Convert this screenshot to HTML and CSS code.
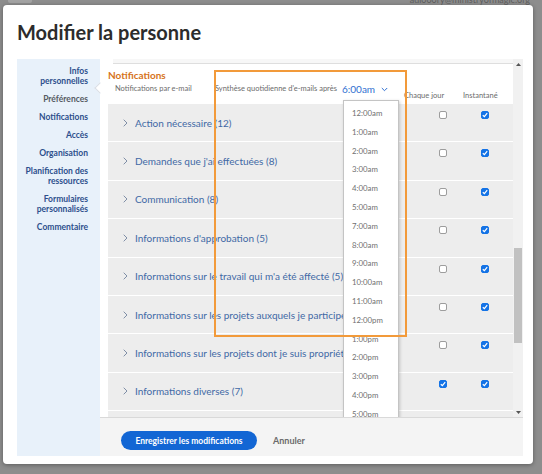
FILE: index.html
```html
<!DOCTYPE html>
<html lang="fr">
<head>
<meta charset="utf-8">
<title>Modifier la personne</title>
<link rel="stylesheet" href="styles.css">
</head>
<body>
<div class="app-bar">
  <span class="app-tab"></span>
  <span class="app-email">adiooory@ministryofmagic.org</span>
</div>

<div class="modal">
  <h1 class="title">Modifier la personne</h1>
  <div class="body">
    <nav class="side">
      <a class="side-item">Infos<br>personnelles</a>
      <a class="side-item muted">Préférences</a>
      <a class="side-item">Notifications</a>
      <a class="side-item">Accès</a>
      <a class="side-item">Organisation</a>
      <a class="side-item">Planification des<br>ressources</a>
      <a class="side-item">Formulaires<br>personnalisés</a>
      <a class="side-item">Commentaire</a>
    </nav>
    <div class="main">
      <span class="notch"></span>
      <div class="scroll">
        <div class="content">
          <div class="strip"></div>
          <div class="section">
            <div class="sec-title">Notifications</div>
            <div class="head">
              <span class="lbl">Notifications par e-mail</span>
              <span class="synth">Synthèse quotidienne d'e-mails après</span>
              <span class="sel">6:00am<svg class="sel-chev" width="7" height="5" viewBox="0 0 7 5"><path d="M0.8 1 L3.5 3.7 L6.2 1" fill="none" stroke="#2f6fd0" stroke-width="1"/></svg></span>
              <span class="spacer"></span>
              <span class="col col-a">Chaque jour</span>
              <span class="col col-b">Instantané</span>
            </div>

            <div class="row">
              <svg class="chev" width="5" height="8" viewBox="0 0 5 8"><path d="M0.7 0.7 L4 4 L0.7 7.3" fill="none" stroke="#7f8ea6" stroke-width="1"/></svg>
              <span class="row-label">Action nécessaire (12)</span>
              <span class="spacer"></span>
              <span class="cb-cell"><span class="cb"></span></span>
              <span class="cb-cell"><span class="cb on"><svg width="6" height="6" viewBox="0 0 6 6"><path d="M0.8 3.2 L2.4 4.7 L5.2 1.2" fill="none" stroke="#fff" stroke-width="1.2"/></svg></span></span>
            </div>
            <div class="row">
              <svg class="chev" width="5" height="8" viewBox="0 0 5 8"><path d="M0.7 0.7 L4 4 L0.7 7.3" fill="none" stroke="#7f8ea6" stroke-width="1"/></svg>
              <span class="row-label">Demandes que j'ai effectuées (8)</span>
              <span class="spacer"></span>
              <span class="cb-cell"><span class="cb"></span></span>
              <span class="cb-cell"><span class="cb on"><svg width="6" height="6" viewBox="0 0 6 6"><path d="M0.8 3.2 L2.4 4.7 L5.2 1.2" fill="none" stroke="#fff" stroke-width="1.2"/></svg></span></span>
            </div>
            <div class="row">
              <svg class="chev" width="5" height="8" viewBox="0 0 5 8"><path d="M0.7 0.7 L4 4 L0.7 7.3" fill="none" stroke="#7f8ea6" stroke-width="1"/></svg>
              <span class="row-label">Communication (8)</span>
              <span class="spacer"></span>
              <span class="cb-cell"><span class="cb"></span></span>
              <span class="cb-cell"><span class="cb on"><svg width="6" height="6" viewBox="0 0 6 6"><path d="M0.8 3.2 L2.4 4.7 L5.2 1.2" fill="none" stroke="#fff" stroke-width="1.2"/></svg></span></span>
            </div>
            <div class="row">
              <svg class="chev" width="5" height="8" viewBox="0 0 5 8"><path d="M0.7 0.7 L4 4 L0.7 7.3" fill="none" stroke="#7f8ea6" stroke-width="1"/></svg>
              <span class="row-label">Informations d'approbation (5)</span>
              <span class="spacer"></span>
              <span class="cb-cell"><span class="cb"></span></span>
              <span class="cb-cell"><span class="cb on"><svg width="6" height="6" viewBox="0 0 6 6"><path d="M0.8 3.2 L2.4 4.7 L5.2 1.2" fill="none" stroke="#fff" stroke-width="1.2"/></svg></span></span>
            </div>
            <div class="row">
              <svg class="chev" width="5" height="8" viewBox="0 0 5 8"><path d="M0.7 0.7 L4 4 L0.7 7.3" fill="none" stroke="#7f8ea6" stroke-width="1"/></svg>
              <span class="row-label">Informations sur le travail qui m'a été affecté (5)</span>
              <span class="spacer"></span>
              <span class="cb-cell"><span class="cb"></span></span>
              <span class="cb-cell"><span class="cb on"><svg width="6" height="6" viewBox="0 0 6 6"><path d="M0.8 3.2 L2.4 4.7 L5.2 1.2" fill="none" stroke="#fff" stroke-width="1.2"/></svg></span></span>
            </div>
            <div class="row">
              <svg class="chev" width="5" height="8" viewBox="0 0 5 8"><path d="M0.7 0.7 L4 4 L0.7 7.3" fill="none" stroke="#7f8ea6" stroke-width="1"/></svg>
              <span class="row-label">Informations sur les projets auxquels je participe</span>
              <span class="spacer"></span>
              <span class="cb-cell"><span class="cb"></span></span>
              <span class="cb-cell"><span class="cb on"><svg width="6" height="6" viewBox="0 0 6 6"><path d="M0.8 3.2 L2.4 4.7 L5.2 1.2" fill="none" stroke="#fff" stroke-width="1.2"/></svg></span></span>
            </div>
            <div class="row">
              <svg class="chev" width="5" height="8" viewBox="0 0 5 8"><path d="M0.7 0.7 L4 4 L0.7 7.3" fill="none" stroke="#7f8ea6" stroke-width="1"/></svg>
              <span class="row-label">Informations sur les projets dont je suis propriét</span>
              <span class="spacer"></span>
              <span class="cb-cell"><span class="cb"></span></span>
              <span class="cb-cell"><span class="cb on"><svg width="6" height="6" viewBox="0 0 6 6"><path d="M0.8 3.2 L2.4 4.7 L5.2 1.2" fill="none" stroke="#fff" stroke-width="1.2"/></svg></span></span>
            </div>
            <div class="row">
              <svg class="chev" width="5" height="8" viewBox="0 0 5 8"><path d="M0.7 0.7 L4 4 L0.7 7.3" fill="none" stroke="#7f8ea6" stroke-width="1"/></svg>
              <span class="row-label">Informations diverses (7)</span>
              <span class="spacer"></span>
              <span class="cb-cell"><span class="cb on"><svg width="6" height="6" viewBox="0 0 6 6"><path d="M0.8 3.2 L2.4 4.7 L5.2 1.2" fill="none" stroke="#fff" stroke-width="1.2"/></svg></span></span>
              <span class="cb-cell"><span class="cb on"><svg width="6" height="6" viewBox="0 0 6 6"><path d="M0.8 3.2 L2.4 4.7 L5.2 1.2" fill="none" stroke="#fff" stroke-width="1.2"/></svg></span></span>
            </div>
            <div class="row row-last">
              <span class="spacer"></span>
            </div>
          </div>
        </div>

        <div class="sbar">
          <span class="sb-btn"><svg width="5" height="3" viewBox="0 0 5 3"><path d="M0 3 L2.5 0 L5 3 Z" fill="#555"/></svg></span>
          <span class="sb-track"><span class="sb-thumb"></span></span>
          <span class="sb-btn"><svg width="5" height="3" viewBox="0 0 5 3"><path d="M0 0 L2.5 3 L5 0 Z" fill="#555"/></svg></span>
        </div>

        <ul class="dropdown">
          <li>12:00am</li>
          <li>1:00am</li>
          <li>2:00am</li>
          <li>3:00am</li>
          <li>4:00am</li>
          <li>5:00am</li>
          <li>7:00am</li>
          <li>8:00am</li>
          <li>9:00am</li>
          <li>10:00am</li>
          <li>11:00am</li>
          <li>12:00pm</li>
          <li>1:00pm</li>
          <li>2:00pm</li>
          <li>3:00pm</li>
          <li>4:00pm</li>
          <li>5:00pm</li>
        </ul>
      </div>
      <div class="footer">
        <button class="btn-primary">Enregistrer les modifications</button>
        <button class="btn-link">Annuler</button>
      </div>
    </div>
  </div>
</div>

<div class="annot"></div>
</body>
</html>
```

FILE: styles.css
```css
html, body {
  margin: 0;
  padding: 0;
}
body {
  width: 542px;
  height: 474px;
  overflow: hidden;
  background: #8d8d8d;
  font-family: Lato, "Open Sans", Arial, sans-serif;
  position: relative;
}

.app-bar {
  display: flex;
  justify-content: space-between;
  align-items: flex-start;
  height: 5px;
  padding: 0 12px 0 8px;
  overflow: hidden;
}
.app-tab {
  width: 24px;
  height: 3px;
  background: #a3a3a3;
  border-radius: 0 0 2px 2px;
}
.app-email {
  font-size: 9px;
  line-height: 10px;
  color: #5e5e5e;
  margin-top: -5px;
}

.modal {
  position: absolute;
  left: 3px;
  top: 5px;
  width: 530px;
  height: 459px;
  box-sizing: border-box;
  padding: 0 10px 8px 14px;
  background: #fff;
  border-radius: 4px;
  box-shadow: 0 1px 4px rgba(0, 0, 0, 0.35);
  display: flex;
  flex-direction: column;
}

.title {
  margin: 0;
  height: 54px;
  box-sizing: border-box;
  padding-top: 15px;
  font-size: 20px;
  line-height: 24px;
  font-weight: 700;
  color: #2c2c2c;
}

.body {
  display: flex;
  height: 397px;
}

.side {
  width: 83px;
  box-sizing: border-box;
  padding: 7px 12px 0 0;
  background: #e8f1fa;
  display: flex;
  flex-direction: column;
  gap: 8px;
  text-align: right;
}
.side-item {
  font-size: 8.5px;
  line-height: 10px;
  font-weight: 700;
  color: #2d4f8c;
}
.side-item.muted {
  color: #555a62;
}

.main {
  flex: 1;
  display: flex;
  flex-direction: column;
  position: relative;
  background: #fff;
}
.notch {
  position: absolute;
  left: -4px;
  top: 25px;
  width: 7px;
  height: 7px;
  background: #fff;
  border-left: 1px solid #d9dee5;
  border-bottom: 1px solid #d9dee5;
  transform: rotate(45deg);
}

.scroll {
  height: 358px;
  position: relative;
  overflow: hidden;
  display: flex;
}
.content {
  width: 413px;
}
.strip {
  margin-left: 13px;
  height: 4px;
  background: #f7f7f7;
  border-bottom: 1px solid #dedede;
}
.section {
  padding-left: 8px;
}
.sec-title {
  margin-top: 5px;
  font-size: 10px;
  line-height: 12px;
  font-weight: 700;
  color: #d6731a;
}

.head {
  height: 23px;
  box-sizing: border-box;
  padding: 3px 16px 0 7px;
  display: flex;
  align-items: flex-start;
  font-size: 7.5px;
  line-height: 10px;
  color: #6c6c6c;
  white-space: nowrap;
}
.lbl {
  width: 100px;
}
.synth {
  width: 127px;
}
.sel {
  display: flex;
  align-items: center;
  font-size: 10px;
  line-height: 10px;
  color: #2f6fd0;
}
.sel-chev {
  margin-left: 6px;
}
.spacer {
  flex: 1;
}
.col {
  text-align: center;
  font-size: 7.5px;
  margin-top: 7px;
}
.col-a {
  width: 40px;
  margin-right: 19px;
}
.col-b {
  width: 34px;
}

.row {
  height: 38.4px;
  box-sizing: border-box;
  border-bottom: 1px solid #fff;
  background: #ededed;
  display: flex;
  align-items: center;
  padding: 0 7px 0 15px;
}
.chev {
  margin-right: 7px;
  flex: none;
}
.row-label {
  width: 208px;
  overflow: hidden;
  white-space: nowrap;
  font-size: 10px;
  color: #4169a5;
}
.cb-cell {
  width: 42px;
  align-self: flex-start;
  padding-top: 7px;
  display: flex;
  justify-content: center;
}
.cb {
  width: 8px;
  height: 8px;
  box-sizing: border-box;
  border: 1px solid #9d9d9d;
  border-radius: 2px;
  background: #fff;
  display: flex;
  align-items: center;
  justify-content: center;
}
.cb.on {
  background: #1473e6;
  border-color: #1473e6;
}

.sbar {
  width: 10px;
  background: #f1f1f1;
  display: flex;
  flex-direction: column;
}
.sb-btn {
  height: 10px;
  display: flex;
  align-items: center;
  justify-content: center;
}
.sb-track {
  flex: 1;
  padding: 0 1px;
}
.sb-thumb {
  display: block;
  margin-top: 179px;
  height: 95px;
  background: #c1c1c1;
}

.dropdown {
  position: absolute;
  left: 243px;
  top: 41px;
  width: 56px;
  height: 345px;
  box-sizing: border-box;
  margin: 0;
  padding: 3px 0 0 8px;
  list-style: none;
  background: #fff;
  border: 1px solid #c4c4c4;
  box-shadow: 1px 1px 3px rgba(0, 0, 0, 0.18);
  overflow: hidden;
}
.dropdown li {
  height: 18.8px;
  line-height: 18.8px;
  font-size: 7.8px;
  color: #707070;
}

.footer {
  height: 39px;
  box-sizing: border-box;
  background: #f4f4f4;
  border-top: 1px solid #d9d9d9;
  display: flex;
  align-items: flex-start;
  padding: 13px 0 0 21px;
  gap: 16px;
}
.btn-primary {
  height: 19px;
  width: 136px;
  padding: 0;
  border: none;
  border-radius: 10px;
  background: #1266d4;
  color: #fff;
  font-family: Lato, "Open Sans", Arial, sans-serif;
  font-size: 8.5px;
  font-weight: 700;
}
.btn-link {
  height: 19px;
  padding: 0;
  border: none;
  background: transparent;
  color: #6b6b6b;
  font-family: Lato, "Open Sans", Arial, sans-serif;
  font-size: 9px;
  font-weight: 700;
}

.annot {
  position: absolute;
  left: 214px;
  top: 70px;
  width: 193px;
  height: 267px;
  box-sizing: border-box;
  border: 2px solid #f29a3a;
}
```
